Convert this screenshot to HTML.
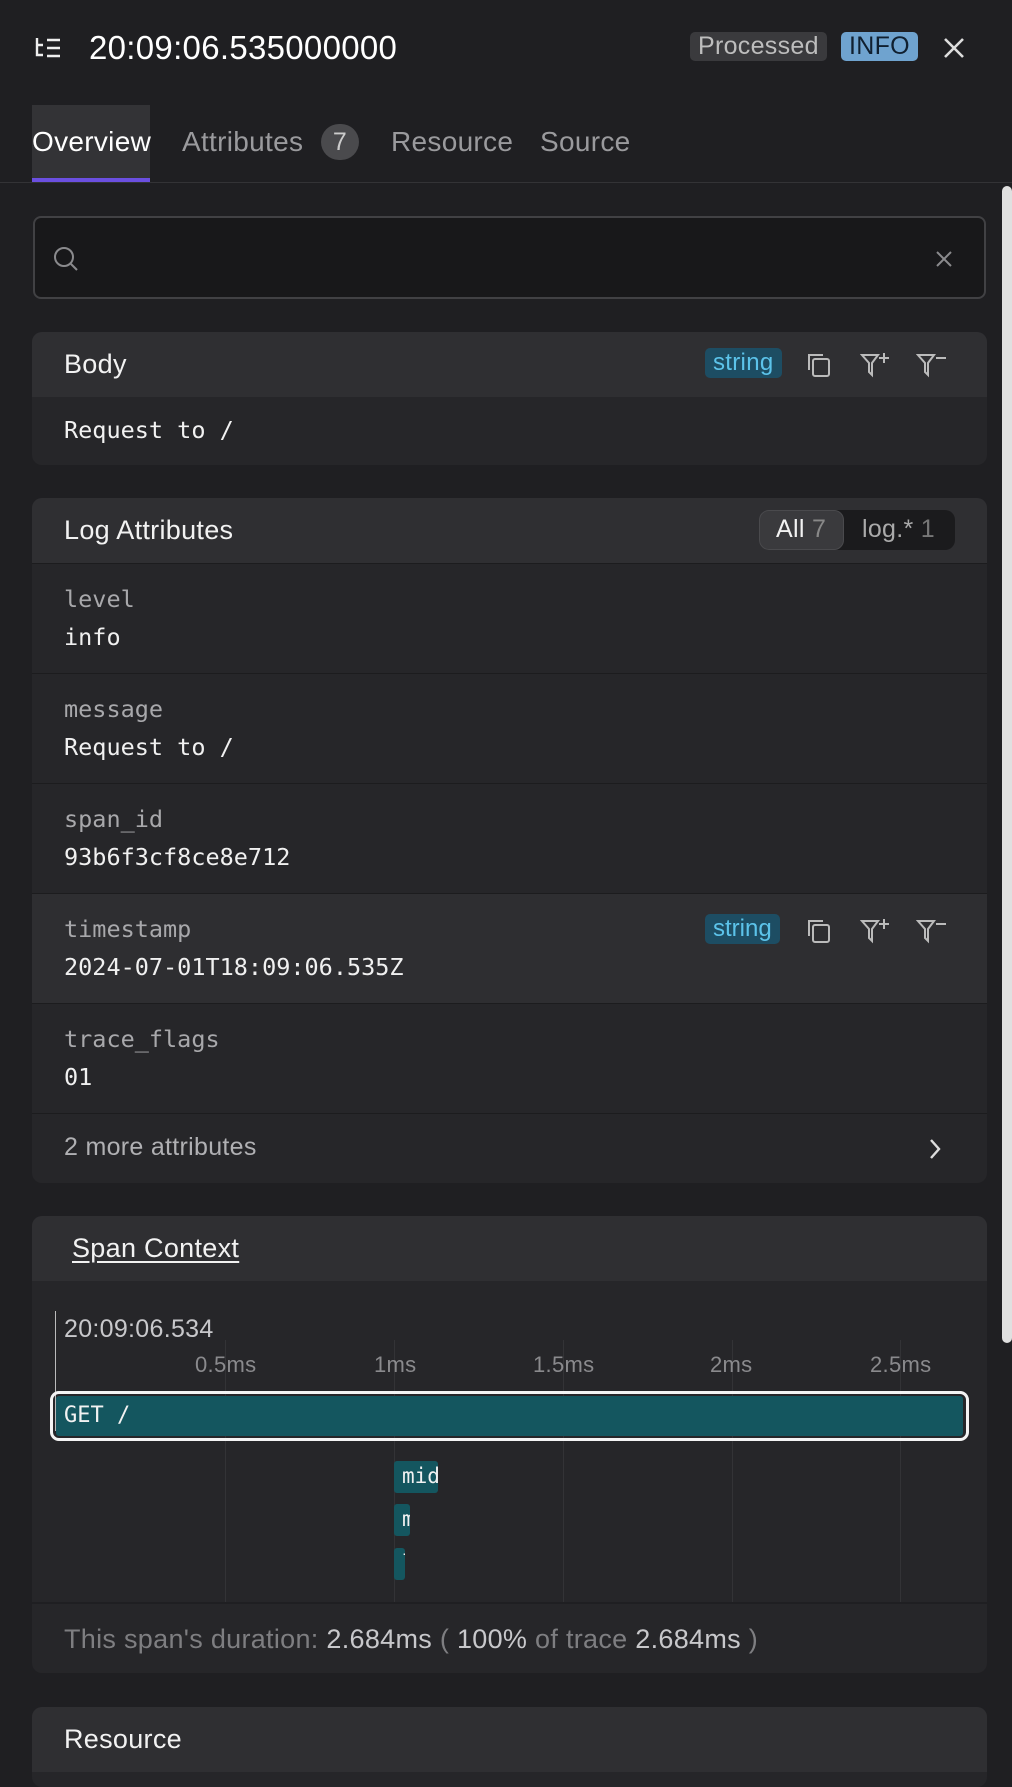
<!DOCTYPE html><html><head><style>
*{box-sizing:border-box;margin:0;padding:0}
body{width:1012px;height:1766px;background:#1f1f22;color:#f2f2f2;font-family:"Liberation Sans",sans-serif;position:relative;overflow:hidden;letter-spacing:0.3px}
.a{position:absolute}
.mono{font-family:"DejaVu Sans Mono","Liberation Mono",monospace;letter-spacing:0}
.card{position:absolute;left:32px;width:955px;background:#262629;border-radius:10px;overflow:hidden}
.hd{background:#2f2f32;height:65px;position:relative;font-size:27px;padding:17px 0 0 32px}
.row{position:relative;height:110px;border-top:1px solid #1c1c1e;padding:21px 0 0 32px;font-size:23.5px}
.row .k{color:#a8a8ab}
.row .v{margin-top:10px;color:#f0f0f0}
.tag{position:absolute;background:#1d4d63;color:#5cc3ea;font-size:24px;padding:1px 8px;border-radius:5px;font-family:"Liberation Sans",sans-serif}
.tk{position:absolute;top:1352px;color:#8a8a8d;font-size:22px}
.gl{position:absolute;top:1340px;height:262px;width:1px;background:#333336}
</style></head><body>
<svg class="a" style="left:34px;top:36px" width="28" height="24" viewBox="0 0 28 24" fill="none" stroke="#eee" stroke-width="2.4"><path d="M3 2v17h6M3 9h6M13 4h13M13 12h13M13 20h13"/></svg>
<div class="a" style="left:89px;top:29px;font-size:33px;color:#fff">20:09:06.535000000</div>
<div class="a" style="left:690px;top:32px;background:#3a3a3d;color:#bdbdbd;font-size:25px;padding:0 8px;border-radius:5px">Processed</div>
<div class="a" style="left:841px;top:32px;background:#6fa3cf;color:#102030;font-size:25px;padding:0 8px;border-radius:5px">INFO</div>
<svg class="a" style="left:943px;top:37px" width="22" height="22" stroke="#ddd" stroke-width="2.6"><path d="M2 2L20 20M20 2L2 20"/></svg>
<div class="a" style="left:32px;top:105px;width:118px;height:77px;background:#333336"></div>
<div class="a" style="left:32px;top:178px;width:118px;height:4px;background:#6b4fe0"></div>
<div class="a" style="left:0;top:182px;width:1012px;height:1px;background:#333336"></div>
<div class="a" style="left:32px;top:126px;font-size:28px;color:#fff">Overview</div>
<div class="a" style="left:182px;top:126px;font-size:28px;color:#9a9a9d">Attributes</div>
<div class="a" style="left:321px;top:124px;width:38px;height:36px;border-radius:18px;background:#4a4a4d;color:#ccc;font-size:25px;text-align:center;line-height:36px">7</div>
<div class="a" style="left:391px;top:126px;font-size:28px;color:#9a9a9d">Resource</div>
<div class="a" style="left:540px;top:126px;font-size:28px;color:#9a9a9d">Source</div>
<div class="a" style="left:1002px;top:186px;width:10px;height:1157px;background:#e0e0e0;border-radius:5px"></div>
<div class="a" style="left:33px;top:216px;width:953px;height:83px;background:#18181a;border:2px solid #414144;border-radius:8px"></div>
<svg class="a" style="left:52px;top:245px" width="28" height="28" fill="none" stroke="#8a8a8d" stroke-width="2"><circle cx="12" cy="12" r="9"/><path d="M19 19l6 6"/></svg>
<svg class="a" style="left:935px;top:250px" width="18" height="18" stroke="#8a8a8d" stroke-width="2"><path d="M2 2l14 14M16 2L2 16"/></svg>

<div class="card" style="top:332px;height:133px">
<div class="hd">Body
<span class="tag" style="left:673px;top:16px">string</span>
<svg class="a" style="left:772px;top:18px" width="30" height="30" fill="none" stroke="#bbb" stroke-width="2"><rect x="9" y="9" width="16" height="17" rx="2"/><path d="M5 20V5h14"/></svg>
<svg class="a" style="left:828px;top:18px" width="34" height="30" fill="none" stroke="#bbb" stroke-width="2"><path d="M2 5h16l-6 8v12l-3-3V13z M24 3v10M19 8h10"/></svg>
<svg class="a" style="left:884px;top:18px" width="34" height="30" fill="none" stroke="#bbb" stroke-width="2"><path d="M2 5h16l-6 8v12l-3-3V13z M20 8h10"/></svg>
</div>
<div class="mono a" style="left:32px;top:84px;font-size:23.5px">Request to /</div>
</div>

<div class="card" style="top:498px;height:685px">
<div class="hd">Log Attributes
<div class="a" style="left:727px;top:12px;width:196px;height:40px;background:#1b1b1d;border-radius:10px"></div>
<div class="a" style="left:727px;top:12px;width:85px;height:40px;background:#3a3a3d;border-radius:10px;border:1px solid #4a4a4d"></div>
<span class="a" style="left:744px;top:17px;font-size:25px">All <span style="color:#888">7</span></span>
<span class="a" style="left:830px;top:17px;font-size:25px;color:#aaa">log.* <span style="color:#777">1</span></span>
</div>
<div class="row mono"><div class="k">level</div><div class="v">info</div></div>
<div class="row mono"><div class="k">message</div><div class="v">Request to /</div></div>
<div class="row mono"><div class="k">span_id</div><div class="v">93b6f3cf8ce8e712</div></div>
<div class="row mono" style="background:#2e2e31"><div class="k">timestamp</div><div class="v">2024-07-01T18:09:06.535Z</div>
<span class="tag" style="left:673px;top:20px">string</span>
<svg class="a" style="left:772px;top:22px" width="30" height="30" fill="none" stroke="#bbb" stroke-width="2"><rect x="9" y="9" width="16" height="17" rx="2"/><path d="M5 20V5h14"/></svg>
<svg class="a" style="left:828px;top:22px" width="34" height="30" fill="none" stroke="#bbb" stroke-width="2"><path d="M2 5h16l-6 8v12l-3-3V13z M24 3v10M19 8h10"/></svg>
<svg class="a" style="left:884px;top:22px" width="34" height="30" fill="none" stroke="#bbb" stroke-width="2"><path d="M2 5h16l-6 8v12l-3-3V13z M20 8h10"/></svg>
</div>
<div class="row mono"><div class="k">trace_flags</div><div class="v">01</div></div>
<div class="row" style="height:70px;padding-top:19px;color:#b0b0b3;font-size:25px">2 more attributes
<svg class="a" style="left:896px;top:24px" width="14" height="22" fill="none" stroke="#ddd" stroke-width="2.4"><path d="M3 2l8 9-8 9"/></svg></div>
</div>

<div class="card" style="top:1216px;height:457px">
<div class="hd" style="padding-left:40px"><span style="text-decoration:underline;text-underline-offset:4px">Span Context</span></div>
</div>
<div class="gl" style="left:225px"></div><div class="gl" style="left:394px"></div><div class="gl" style="left:563px"></div><div class="gl" style="left:732px"></div><div class="gl" style="left:900px"></div>
<div class="a" style="left:55px;top:1311px;width:1px;height:120px;background:#bbb"></div>
<div class="a" style="left:64px;top:1315px;font-size:25px;color:#c8c8cb">20:09:06.534</div>
<div class="tk" style="left:195px">0.5ms</div><div class="tk" style="left:374px">1ms</div><div class="tk" style="left:533px">1.5ms</div><div class="tk" style="left:710px">2ms</div><div class="tk" style="left:870px">2.5ms</div>
<div class="a" style="left:50px;top:1391px;width:919px;height:50px;border:3px solid #f4f4f4;border-radius:9px"></div>
<div class="a mono" style="left:56px;top:1396px;width:907px;height:40px;background:#14565f;border-radius:3px;font-size:22px;padding:7px 0 0 8px">GET /</div>
<div class="a mono" style="left:394px;top:1461px;width:44px;height:32px;background:#14565f;border-radius:3px;font-size:21px;padding:3px 0 0 8px;overflow:hidden">mid</div>
<div class="a mono" style="left:394px;top:1504px;width:16px;height:32px;background:#14565f;border-radius:3px;font-size:21px;padding:3px 0 0 8px;overflow:hidden">m</div>
<div class="a mono" style="left:394px;top:1548px;width:11px;height:32px;background:#14565f;border-radius:3px;font-size:21px;padding:3px 0 0 8px;overflow:hidden">l</div>
<div class="a" style="left:32px;top:1602px;width:955px;height:2px;background:#1f1f22"></div>
<div class="a" style="left:64px;top:1624px;font-size:27px;color:#7e7e81">This span's duration: <span style="color:#c8c8cb">2.684ms</span> ( <span style="color:#c8c8cb">100%</span> of trace <span style="color:#c8c8cb">2.684ms</span> )</div>

<div class="card" style="top:1707px;height:80px"><div class="hd">Resource</div></div>
</body></html>
